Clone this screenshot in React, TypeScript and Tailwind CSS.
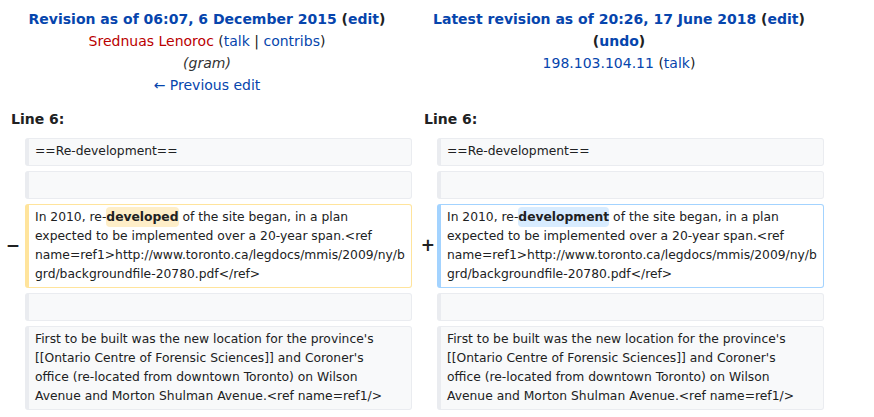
const link = "text-[#0645ad]";

function Box({
  kind = "context",
  children,
}: {
  kind?: "context" | "del" | "add";
  children?: React.ReactNode;
}) {
  const cls =
    kind === "del"
      ? "bg-white border-[#ffe49c]"
      : kind === "add"
        ? "bg-white border-[#a3d3ff]"
        : "bg-[#f8f9fa] border-[#eaecf0]";
  return (
    <div
      className={`min-h-[28px] rounded-[3px] border border-l-4 px-[6px] py-[3px] text-[12.32px] leading-[19px] break-words ${cls}`}
    >
      {children}
    </div>
  );
}

function Marker({ sign, className = "" }: { sign?: string; className?: string }) {
  return (
    <div className={`flex items-center justify-end text-[17px] font-bold ${className}`}>
      {sign}
    </div>
  );
}

const LONG_LINE_START = "In 2010, re-";
const LONG_LINE_END =
  " of the site began, in a plan expected to be implemented over a 20-year span.<ref name=ref1>http://www.toronto.ca/legdocs/mmis/2009/ny/bgrd/backgroundfile-20780.pdf</ref>";

// the source wraps at these points in the reference rendering
function FirstBuilt() {
  return (
    <>
      First to be built was the new location for the province's
      <br />
      [[Ontario Centre of Forensic Sciences]] and Coroner's
      <br />
      office (re-located from downtown Toronto) on Wilson
      <br />
      Avenue and Morton Shulman Avenue.&lt;ref name=ref1/&gt;
    </>
  );
}

export default function App() {
  return (
    <div className="w-[874px] h-[417px] overflow-hidden bg-white font-['DejaVu_Sans',sans-serif] text-[14px] text-[#202122]">
      <div className="grid w-[824px] grid-cols-[25px_387px_25px_387px] gap-y-[5px]">
        {/* header */}
        <div className="col-span-2 pt-[8px] pl-[2px] text-center leading-[22px]">
          <div className="font-bold">
            <span className={link}>Revision as of 06:07, 6 December 2015</span> (
            <span className={link}>edit</span>)
          </div>
          <div>
            <span className="text-[#ba0000]">Srednuas Lenoroc</span> (
            <span className={link}>talk</span> | <span className={link}>contribs</span>)
          </div>
          <div className="italic text-[#333]">(gram)</div>
          <div className={link}>← Previous edit</div>
        </div>
        <div className="col-span-2 pt-[8px] pl-[2px] text-center leading-[22px]">
          <div className="font-bold">
            <span className={link}>Latest revision as of 20:26, 17 June 2018</span> (
            <span className={link}>edit</span>)
          </div>
          <div className="font-bold">
            (<span className={link}>undo</span>)
          </div>
          <div>
            <span className={link}>198.103.104.11</span> (<span className={link}>talk</span>)
          </div>
        </div>

        {/* line numbers */}
        <div className="col-span-2 pl-[11px] pt-[8px] pb-[3px] font-bold">Line 6:</div>
        <div className="col-span-2 pl-[12px] pt-[8px] pb-[3px] font-bold">Line 6:</div>

        {/* context */}
        <div />
        <Box>==Re-development==</Box>
        <div />
        <Box>==Re-development==</Box>

        <div />
        <Box />
        <div />
        <Box />

        {/* changed */}
        <Marker sign="−" className="pr-[5px]" />
        <Box kind="del">
          {LONG_LINE_START}
          <span className="rounded-[4px] bg-[#feeec8] py-[3px] font-bold">developed</span>
          {LONG_LINE_END}
        </Box>
        <Marker sign="+" className="pr-[2px]" />
        <Box kind="add">
          {LONG_LINE_START}
          <span className="rounded-[4px] bg-[#d8ecff] py-[3px] font-bold">development</span>
          {LONG_LINE_END}
        </Box>

        <div />
        <Box />
        <div />
        <Box />

        <div />
        <Box>
          <FirstBuilt />
        </Box>
        <div />
        <Box>
          <FirstBuilt />
        </Box>
      </div>
    </div>
  );
}
